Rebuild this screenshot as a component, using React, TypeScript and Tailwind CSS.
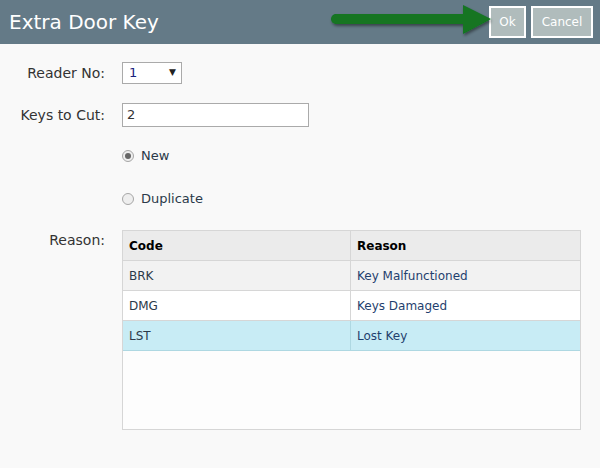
import React from "react";

export default function App() {
  const rows = [
    { code: "BRK", reason: "Key Malfunctioned", bg: "bg-[#f2f2f2]" },
    { code: "DMG", reason: "Keys Damaged", bg: "bg-white" },
    { code: "LST", reason: "Lost Key", bg: "bg-[#c8ecf5]" },
  ];
  return (
    <div
      className="w-[600px] h-[468px] bg-[#f9f9f9] text-[#333] overflow-hidden"
      style={{ fontFamily: '"DejaVu Sans", Verdana, sans-serif' }}
    >
      <div className="relative h-[44px] bg-[#647a87] flex items-center justify-between pl-[9px] pr-[7px]">
        <div className="text-white text-[20px] leading-none">Extra Door Key</div>
        <div className="flex gap-[5px]">
          <button className="h-[32px] w-[37px] border-2 border-white bg-[#b0bcbc] text-white text-[12px]">Ok</button>
          <button className="h-[32px] w-[62px] border-2 border-white bg-[#b0bcbc] text-white text-[12px]">Cancel</button>
        </div>
        <svg className="absolute left-[326px] top-[2px]" width="170" height="40" viewBox="0 0 170 40">
          <defs>
            <filter id="sh" x="-10%" y="-30%" width="130%" height="170%">
              <feDropShadow dx="1" dy="2" stdDeviation="1.5" floodColor="#000" floodOpacity="0.45" />
            </filter>
          </defs>
          <g filter="url(#sh)">
            <line x1="10" y1="17" x2="140" y2="17" stroke="#127520" strokeWidth="10" strokeLinecap="round" />
            <polygon points="137,3 165,17 137,32" fill="#127520" />
          </g>
        </svg>
      </div>
      <div className="grid grid-cols-[105px_1fr] gap-x-[17px] pt-[18px] text-[13px]">
        <div className="text-right text-[14px] h-[22px] flex items-center justify-end">Reader No:</div>
        <div>
          <div className="w-[60px] h-[22px] border border-[#aaa] bg-white flex items-center justify-between pl-[6px] pr-[5px]">
            <span className="text-[#1a237e]">1</span>
            <span className="text-[9px] text-[#222]">▼</span>
          </div>
        </div>
        <div className="text-right text-[14px] h-[24px] mt-[19px] flex items-center justify-end">Keys to Cut:</div>
        <div className="mt-[19px]">
          <div className="w-[187px] h-[24px] border border-[#aaa] bg-white flex items-center pl-[4px]">2</div>
        </div>
        <div />
        <div className="mt-[21px] flex items-center h-[16px]">
          <span className="w-[12px] h-[12px] rounded-full border border-[#a6a6a6] bg-[#eee] flex items-center justify-center">
            <span className="w-[6px] h-[6px] rounded-full bg-[#666]" />
          </span>
          <span className="ml-[7px] text-[#2b3a4a]">New</span>
        </div>
        <div />
        <div className="mt-[27px] flex items-center h-[16px]">
          <span className="w-[12px] h-[12px] rounded-full border border-[#a6a6a6] bg-[#eee]" />
          <span className="ml-[7px] text-[#2b3a4a]">Duplicate</span>
        </div>
        <div className="text-right text-[14px] mt-[23px]">Reason:</div>
        <div className="mt-[23px]">
          <div className="w-[459px] h-[200px] border border-[#d6d6d6] bg-[#fdfdfd] text-[12px]">
            <div className="flex h-[30px] bg-[#ebebeb] border-b border-[#d6d6d6] font-bold text-black">
              <div className="w-[228px] border-r border-[#d6d6d6] flex items-center pl-[6px]">Code</div>
              <div className="flex-1 flex items-center pl-[6px]">Reason</div>
            </div>
            {rows.map((r) => (
              <div key={r.code} className={`flex h-[30px] border-b ${r.code === "LST" ? "border-[#aed8e2]" : "border-[#d6d6d6]"} ${r.bg}`}>
                <div className={`w-[228px] border-r ${r.code === "LST" ? "border-[#aed8e2]" : "border-[#d6d6d6]"} flex items-center pl-[6px] text-[#2b3a4a]`}>{r.code}</div>
                <div className="flex-1 flex items-center pl-[6px] text-[#1f3f6e]">{r.reason}</div>
              </div>
            ))}
          </div>
        </div>
      </div>
    </div>
  );
}
